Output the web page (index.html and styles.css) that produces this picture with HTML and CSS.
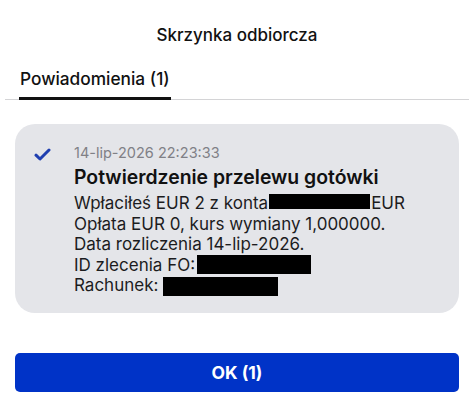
FILE: index.html
```html
<!DOCTYPE html>
<html lang="pl">
<head>
<meta charset="utf-8">
<link rel="stylesheet" href="styles.css">
</head>
<body>
<div class="page">
  <header class="header">Skrzynka odbiorcza</header>
  <nav class="tabs">
    <div class="tab active">Powiadomienia (1)</div>
  </nav>
  <section class="card">
    <div class="check">
      <svg class="check-icon" width="17" height="13" viewBox="0 0 17 13"><path d="M2 7.2 L6 11 L15 2" fill="none" stroke="#1f3fb0" stroke-width="3" stroke-linecap="round" stroke-linejoin="round"/></svg>
    </div>
    <div class="content">
      <div class="date">14-lip-2026 22:23:33</div>
      <div class="title">Potwierdzenie przelewu gotówki</div>
      <div class="body">
        <div class="line">Wpłaciłeś EUR 2 z konta<span class="redact r1"></span>EUR</div>
        <div class="line">Opłata EUR 0, kurs wymiany 1,000000.</div>
        <div class="line">Data rozliczenia 14-lip-2026.</div>
        <div class="line">ID zlecenia FO:<span class="redact r2"></span></div>
        <div class="line">Rachunek: <span class="redact r3"></span></div>
      </div>
    </div>
  </section>
  <div class="actions">
    <button class="ok">OK (1)</button>
  </div>
</div>
</body>
</html>
```

FILE: styles.css
```css
* { box-sizing: border-box; }
html, body { margin: 0; padding: 0; background: #fff; }
body {
  font-family: Inter, "Noto Sans", sans-serif;
  color: #111;
  width: 474px;
  height: 403px;
  overflow: hidden;
}
.page { padding: 0 15px; }
.header {
  text-align: center;
  font-size: 17px;
  font-weight: 500;
  padding-top: 25px;
  height: 63px;
  line-height: 20px;
}
.tabs {
  margin: 0 -10px;
  border-bottom: 1px solid #d4d4d6;
  display: flex;
  padding-left: 14px;
}
.tab {
  font-size: 17.3px;
  font-weight: 500;
  line-height: 20px;
  padding: 6px 1px 8px;
  border-bottom: 3px solid #111;
  margin-bottom: -1px;
}
.card {
  margin-top: 24px;
  background: #e4e5e9;
  border-radius: 20px;
  display: flex;
  padding: 20px 16px 18px 19px;
  height: 189px;
}
.check { width: 40px; padding-top: 4px; }
.check-icon { display: block; }
.content { flex: 1; }
.date { font-size: 14.5px; color: #808086; line-height: 17px; }
.title { font-size: 19.4px; font-weight: 600; line-height: 22px; margin-top: 5px; color: #111; }
.body { font-size: 17px; line-height: 20.5px; margin-top: 5px; color: #1c1c1e; }
.line { white-space: nowrap; }
.redact { display: inline-block; background: #000; vertical-align: top; }
.r1 { width: 101px; height: 15px; margin-top: 1px; margin-left: 1px; margin-right: 1px; }
.r2 { width: 114px; height: 19px; margin-top: 0.5px; margin-left: 2px; }
.r3 { width: 115px; height: 19px; margin-top: 1.5px; }
.actions { margin-top: 40px; }
.ok {
  display: block;
  width: 100%;
  height: 39px;
  background: #0033c7;
  color: #fff;
  border: none;
  border-radius: 5px;
  font-family: Inter, "Noto Sans", sans-serif;
  font-size: 17.5px;
  font-weight: 700;
}
```
